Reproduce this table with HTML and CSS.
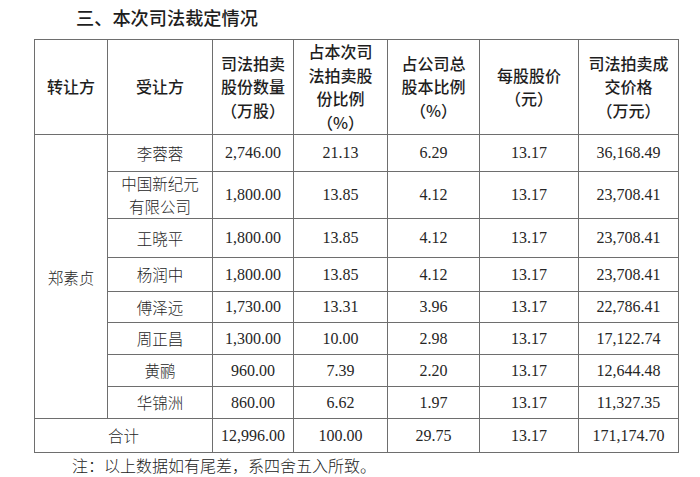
FILE: index.html
```html
<!DOCTYPE html>
<html lang="zh-CN">
<head>
<meta charset="utf-8">
<title>三、本次司法裁定情况</title>
<link rel="stylesheet" href="styles.css">
</head>
<body>
<div class="page">
  <h2 class="title">三、本次司法裁定情况</h2>
  <table class="grid">
    <colgroup>
      <col class="c1"><col class="c2"><col class="c3"><col class="c4"><col class="c5"><col class="c6"><col class="c7">
    </colgroup>
    <thead>
      <tr class="head">
        <th>转让方</th>
        <th>受让方</th>
        <th>司法拍卖<br>股份数量<br>（万股）</th>
        <th>占本次司<br>法拍卖股<br>份比例<br>（%）</th>
        <th>占公司总<br>股本比例<br>（%）</th>
        <th>每股股价<br>（元）</th>
        <th>司法拍卖成<br>交价格<br>（万元）</th>
      </tr>
    </thead>
    <tbody>
      <tr class="r1">
        <td class="seller" rowspan="8">郑素贞</td>
        <td class="cn">李蓉蓉</td><td>2,746.00</td><td>21.13</td><td>6.29</td><td>13.17</td><td>36,168.49</td>
      </tr>
      <tr class="r2"><td class="cn">中国新纪元<br>有限公司</td><td>1,800.00</td><td>13.85</td><td>4.12</td><td>13.17</td><td>23,708.41</td></tr>
      <tr class="r3"><td class="cn">王晓平</td><td>1,800.00</td><td>13.85</td><td>4.12</td><td>13.17</td><td>23,708.41</td></tr>
      <tr class="r4"><td class="cn">杨润中</td><td>1,800.00</td><td>13.85</td><td>4.12</td><td>13.17</td><td>23,708.41</td></tr>
      <tr class="r5"><td class="cn">傅泽远</td><td>1,730.00</td><td>13.31</td><td>3.96</td><td>13.17</td><td>22,786.41</td></tr>
      <tr class="r6"><td class="cn">周正昌</td><td>1,300.00</td><td>10.00</td><td>2.98</td><td>13.17</td><td>17,122.74</td></tr>
      <tr class="r7"><td class="cn">黄鹂</td><td>960.00</td><td>7.39</td><td>2.20</td><td>13.17</td><td>12,644.48</td></tr>
      <tr class="r8"><td class="cn">华锦洲</td><td>860.00</td><td>6.62</td><td>1.97</td><td>13.17</td><td>11,327.35</td></tr>
      <tr class="total"><td class="cn" colspan="2">合计</td><td>12,996.00</td><td>100.00</td><td>29.75</td><td>13.17</td><td>171,174.70</td></tr>
    </tbody>
  </table>
  <p class="note">注：以上数据如有尾差，系四舍五入所致。</p>
</div>
</body>
</html>
```
FILE: styles.css
```css
html, body {
  margin: 0;
  padding: 0;
  background: #ffffff;
}

.page {
  width: 700px;
  height: 477px;
  overflow: hidden;
  color: #222222;
  font-family: "Liberation Serif", "Noto Sans CJK SC", serif;
}

.title {
  margin: 0;
  padding: 5px 0 0 76px;
  height: 34px;
  box-sizing: border-box;
  font-family: "Noto Sans CJK SC", sans-serif;
  font-weight: 500;
  font-size: 18.2px;
  line-height: 24px;
  color: #1e1e1e;
}

.grid {
  margin: 5px 0 0 34px;
  border-collapse: collapse;
  table-layout: fixed;
  width: 644px;
}

.c1 { width: 73px; }
.c2 { width: 105px; }
.c3 { width: 81px; }
.c4 { width: 94px; }
.c5 { width: 92px; }
.c6 { width: 99px; }
.c7 { width: 100px; }

.grid th,
.grid td {
  border: 1px solid #6e6e6e;
  padding: 0;
  text-align: center;
  vertical-align: middle;
}

.grid th {
  font-family: "Noto Sans CJK SC", sans-serif;
  font-weight: 500;
  font-size: 16px;
  line-height: 23.5px;
  color: #1e1e1e;
}

.grid td {
  font-family: "Liberation Serif", "Noto Sans CJK SC", serif;
  font-size: 16px;
  line-height: 22px;
  color: #262626;
}

.grid td.cn {
  font-family: "Noto Sans CJK SC", sans-serif;
  font-weight: 300;
  font-size: 15.5px;
  line-height: 23px;
}

.grid td.seller {
  font-family: "Noto Sans CJK SC", sans-serif;
  font-weight: 300;
  font-size: 15.5px;
  line-height: 23px;
  vertical-align: top;
  padding-top: 131px;
}

.head { height: 95px; }
.r1 { height: 37px; }
.r2 { height: 47px; }
.r3 { height: 39px; }
.r4 { height: 34px; }
.r5 { height: 31px; }
.r6 { height: 32px; }
.r7 { height: 32px; }
.r8 { height: 32px; }
.total { height: 34px; }

.note {
  margin: 0;
  padding: 1px 0 0 72px;
  font-family: "Noto Sans CJK SC", sans-serif;
  font-weight: 300;
  font-size: 16px;
  line-height: 22px;
  color: #222222;
}
```
